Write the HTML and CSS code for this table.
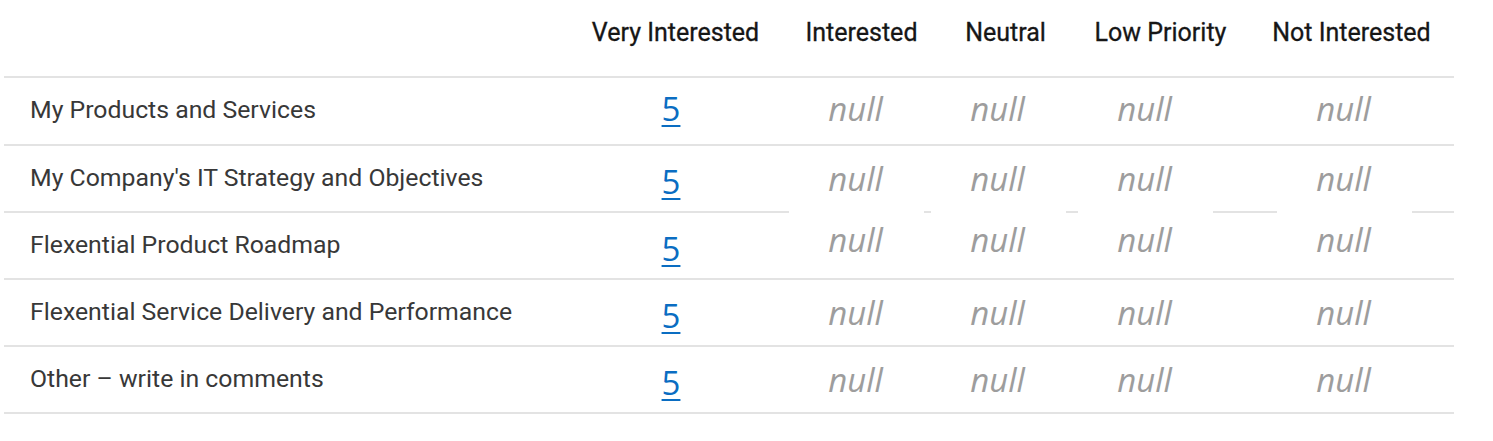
FILE: index.html
```html
<!DOCTYPE html>
<html lang="en">
<head>
<meta charset="utf-8">
<title>Interest Survey</title>
<link rel="stylesheet" href="styles.css">
</head>
<body>
<div class="survey">
  <div class="row row--head">
    <div class="cell"></div>
    <div class="cell cell--head h1">Very Interested</div>
    <div class="cell cell--head h2">Interested</div>
    <div class="cell cell--head h3">Neutral</div>
    <div class="cell cell--head h4">Low Priority</div>
    <div class="cell cell--head h5">Not Interested</div>
  </div>

  <div class="row row--first">
    <div class="cell cell--label">My Products and Services</div>
    <div class="cell cell--value"><a class="count" href="#">5</a></div>
    <div class="cell cell--null"><span class="null">null</span></div>
    <div class="cell cell--null"><span class="null">null</span></div>
    <div class="cell cell--null"><span class="null">null</span></div>
    <div class="cell cell--null"><span class="null">null</span></div>
  </div>

  <div class="row row--gapped">
    <div class="cell cell--label">My Company's IT Strategy and Objectives</div>
    <div class="cell cell--value"><a class="count" href="#">5</a></div>
    <div class="cell cell--null"><span class="null">null</span></div>
    <div class="cell cell--null"><span class="null">null</span></div>
    <div class="cell cell--null"><span class="null">null</span></div>
    <div class="cell cell--null"><span class="null">null</span></div>
  </div>

  <div class="row row--raised">
    <div class="cell cell--label">Flexential Product Roadmap</div>
    <div class="cell cell--value"><a class="count" href="#">5</a></div>
    <div class="cell cell--null"><span class="null">null</span></div>
    <div class="cell cell--null"><span class="null">null</span></div>
    <div class="cell cell--null"><span class="null">null</span></div>
    <div class="cell cell--null"><span class="null">null</span></div>
  </div>

  <div class="row">
    <div class="cell cell--label">Flexential Service Delivery and Performance</div>
    <div class="cell cell--value"><a class="count" href="#">5</a></div>
    <div class="cell cell--null"><span class="null">null</span></div>
    <div class="cell cell--null"><span class="null">null</span></div>
    <div class="cell cell--null"><span class="null">null</span></div>
    <div class="cell cell--null"><span class="null">null</span></div>
  </div>

  <div class="row">
    <div class="cell cell--label">Other – write in comments</div>
    <div class="cell cell--value"><a class="count" href="#">5</a></div>
    <div class="cell cell--null"><span class="null">null</span></div>
    <div class="cell cell--null"><span class="null">null</span></div>
    <div class="cell cell--null"><span class="null">null</span></div>
    <div class="cell cell--null"><span class="null">null</span></div>
  </div>
</div>
</body>
</html>
```

FILE: styles.css
```css
html, body {
  margin: 0;
  padding: 0;
  background: #ffffff;
}

body {
  font-family: Roboto, "Liberation Sans", sans-serif;
}

.survey {
  margin-left: 4px;
  width: 1450px;
}

.row {
  display: grid;
  grid-template-columns: 575px 184px 185px 99px 195px 203px;
  padding-right: 9px;
  height: 65px;
  border-bottom: 2px solid #e3e3e3;
}

.row--head {
  height: 76px;
}

.row--first {
  height: 66px;
}

.cell {
  display: flex;
  align-items: center;
  justify-content: center;
  box-sizing: border-box;
  min-width: 0;
}

.cell--head {
  align-items: flex-start;
  padding-top: 18px;
  font-size: 25px;
  line-height: 30px;
  font-weight: 400;
  color: #161616;
  white-space: nowrap;
  -webkit-text-stroke: 0.3px #161616;
}

.h1 { padding-left: 9px; }
.h2 { padding-left: 12px; }
.h3 { padding-left: 16px; }
.h4 { padding-left: 32px; }
.h5 { padding-left: 16px; }

.cell--label {
  justify-content: flex-start;
  padding-left: 26px;
  padding-bottom: 3px;
  font-size: 24.8px;
  color: #383838;
  white-space: nowrap;
}

.cell--value {
  padding-top: 5px;
}

.count {
  font-family: "Open Sans", "DejaVu Sans", sans-serif;
  font-size: 33px;
  color: #0a6dc2;
  text-decoration: underline;
  text-decoration-thickness: 2px;
  text-underline-offset: 4px;
}

.null {
  font-family: "Open Sans", "DejaVu Sans", sans-serif;
  font-style: italic;
  font-size: 33px;
  color: #9d9d9d;
}

.row--first .cell--value {
  padding-top: 0;
  padding-bottom: 5px;
}

.row--first .cell--null {
  padding-bottom: 5px;
}

.row--raised .cell--null {
  padding-bottom: 12px;
}

/* gaps in the separator under the null cells of the second row */
.row--gapped .cell--null {
  position: relative;
}

.row--gapped .cell--null::after {
  content: "";
  position: absolute;
  left: 50%;
  bottom: -2px;
  width: 135px;
  margin-left: -67px;
  height: 2px;
  background: #ffffff;
}
```
